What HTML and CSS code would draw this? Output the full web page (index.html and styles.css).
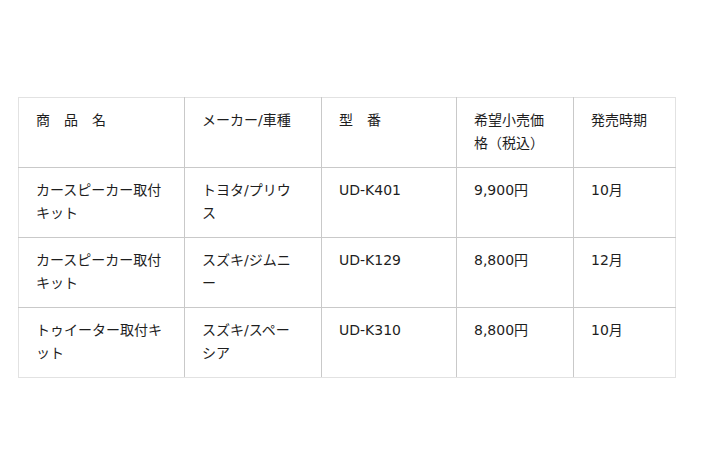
FILE: index.html
```html
<!DOCTYPE html>
<html lang="ja">
<head>
<meta charset="utf-8">
<link rel="stylesheet" href="styles.css">
</head>
<body>
<div class="page">
<table class="spec">
<colgroup>
<col class="c1"><col class="c2"><col class="c3"><col class="c4"><col class="c5">
</colgroup>
<tr>
<td>商　品　名</td><td>メーカー/車種</td><td>型　番</td><td>希望小売価格（税込）</td><td>発売時期</td>
</tr>
<tr>
<td>カースピーカー取付キット</td><td>トヨタ/プリウス</td><td>UD-K401</td><td>9,900円</td><td>10月</td>
</tr>
<tr>
<td>カースピーカー取付キット</td><td>スズキ/ジムニー</td><td>UD-K129</td><td>8,800円</td><td>12月</td>
</tr>
<tr>
<td>トゥイーター取付キット</td><td>スズキ/スペーシア</td><td>UD-K310</td><td>8,800円</td><td>10月</td>
</tr>
</table>
</div>
</body>
</html>
```
FILE: styles.css
```css
html, body {
  margin: 0;
  padding: 0;
  background: #fff;
}
.page {
  padding: 97px 0 0 18px;
}
.spec {
  border-collapse: collapse;
  table-layout: fixed;
  width: 657px;
  font-family: "DejaVu Sans", "Noto Sans CJK JP", sans-serif;
  font-size: 14px;
  line-height: 23px;
  color: #1e1e1e;
  border: 1px solid #e2e2e2;
}
.c1 { width: 166px; }
.c2 { width: 137px; }
.c3 { width: 135px; }
.c4 { width: 117px; }
.c5 { width: 102px; }
.spec td {
  border: 1px solid #c9c9c9;
  height: 46px;
  padding: 11px 19px 12px 17px;
  vertical-align: top;
  word-break: break-all;
}
.spec tr:first-child td { border-top-color: #e2e2e2; }
.spec tr:last-child td { border-bottom-color: #e2e2e2; }
.spec td:first-child { border-left-color: #e2e2e2; }
.spec td:last-child { border-right-color: #e2e2e2; }
```
